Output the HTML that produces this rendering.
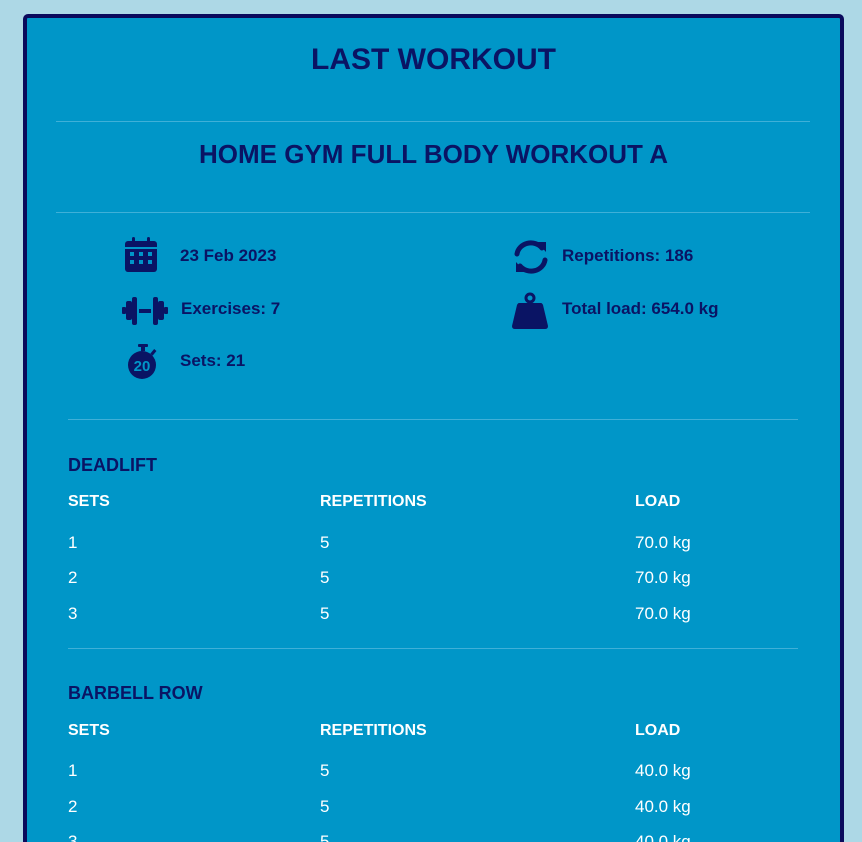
<!DOCTYPE html>
<html style="height:842px;overflow:hidden"><head><style>
body{margin:0;background:#add8e6;width:862px;height:842px;overflow:hidden;font-family:"Liberation Sans",sans-serif;position:relative;}
.card{position:absolute;left:23px;top:14px;width:813px;height:830px;background:#0096c8;border:4px solid #0a0a5c;border-radius:5px;overflow:hidden;}
.t{position:absolute;left:0;width:813px;text-align:center;color:#0a1464;font-weight:bold;}
.hr{position:absolute;height:1px;background:#3fb0d8;}
.st{position:absolute;color:#0a1464;font-weight:bold;font-size:17px;}
.ic{position:absolute;}
.ex{position:absolute;color:#0a1464;font-weight:bold;font-size:18px;}
.h{position:absolute;color:#fff;font-weight:bold;font-size:16px;}
.v{position:absolute;color:#fff;font-size:17px;}
</style></head><body>
<div class="card">
<div class="t" style="top:25px;font-size:30px;">LAST WORKOUT</div>
<div class="hr" style="left:29px;width:754px;top:103px"></div>
<div class="t" style="top:121px;font-size:26px;">HOME GYM FULL BODY WORKOUT A</div>
<div class="hr" style="left:29px;width:754px;top:194px"></div>

<svg class="ic" style="left:98px;top:219px" width="32" height="36" viewBox="0 0 32 36"><rect x="7" y="0" width="3" height="7" rx="1.5" fill="#0a1464"/><rect x="22" y="0" width="3" height="7" rx="1.5" fill="#0a1464"/><rect x="0" y="4" width="32" height="31" rx="3" fill="#0a1464"/><rect x="0" y="10" width="32" height="2" fill="#0096c8"/><g fill="#0096c8"><rect x="5" y="15" width="4" height="4"/><rect x="14" y="15" width="4" height="4"/><rect x="23" y="15" width="4" height="4"/><rect x="5" y="23" width="4" height="4"/><rect x="14" y="23" width="4" height="4"/><rect x="23" y="23" width="4" height="4"/></g></svg>
<div class="st" style="left:153px;top:228px">23 Feb 2023</div>

<svg class="ic" style="left:95px;top:278px" width="46" height="30" viewBox="0 0 46 30"><g fill="#0a1464"><rect x="0" y="11" width="4" height="7" rx="1"/><rect x="4" y="5" width="6" height="19" rx="2"/><rect x="10" y="1" width="5" height="28" rx="2"/><rect x="17" y="13" width="12" height="4"/><rect x="31" y="1" width="5" height="28" rx="2"/><rect x="36" y="5" width="6" height="19" rx="2"/><rect x="42" y="11" width="4" height="7" rx="1"/></g></svg>
<div class="st" style="left:154px;top:281px">Exercises: 7</div>

<svg class="ic" style="left:100px;top:326px" width="32" height="36" viewBox="0 0 32 36"><rect x="11" y="0" width="10" height="3" rx="1" fill="#0a1464"/><rect x="14" y="2" width="4" height="5" fill="#0a1464"/><rect x="25" y="5" width="3" height="6" transform="rotate(40 26 8)" fill="#0a1464"/><circle cx="15" cy="21" r="14" fill="#0a1464"/><text x="15" y="27" text-anchor="middle" fill="#0096c8" font-family="Liberation Sans" font-weight="bold" font-size="15">20</text></svg>
<div class="st" style="left:153px;top:333px">Sets: 21</div>

<svg class="ic" style="left:486px;top:222px" width="36" height="34" viewBox="0 0 36 34"><g fill="none" stroke="#0a1464" stroke-width="5" stroke-linecap="round"><path d="M4 14 A14 13 0 0 1 29 8"/><path d="M32 20 A14 13 0 0 1 7 26"/></g><path d="M24 2 L33 2 L33 12 Z" fill="#0a1464"/><path d="M12 32 L3 32 L3 22 Z" fill="#0a1464"/></svg>
<div class="st" style="left:535px;top:228px">Repetitions: 186</div>

<svg class="ic" style="left:484px;top:274px" width="38" height="38" viewBox="0 0 38 38"><circle cx="19" cy="6" r="4" fill="none" stroke="#0a1464" stroke-width="3"/><path d="M8 11 H30 Q31 11 32 13 L37 34 Q37 37 34 37 H4 Q1 37 1 34 L6 13 Q7 11 8 11Z" fill="#0a1464"/></svg>
<div class="st" style="left:535px;top:281px">Total load: 654.0 kg</div>

<div class="hr" style="left:41px;width:730px;top:401px"></div>
<div class="ex" style="left:41px;top:437px">DEADLIFT</div>
<div class="h" style="left:41px;top:475px">SETS</div><div class="h" style="left:293px;top:475px">REPETITIONS</div><div class="h" style="left:608px;top:475px">LOAD</div>
<div class="v" style="left:41px;top:515px">1</div><div class="v" style="left:293px;top:515px">5</div><div class="v" style="left:608px;top:515px">70.0 kg</div>
<div class="v" style="left:41px;top:550px">2</div><div class="v" style="left:293px;top:550px">5</div><div class="v" style="left:608px;top:550px">70.0 kg</div>
<div class="v" style="left:41px;top:586px">3</div><div class="v" style="left:293px;top:586px">5</div><div class="v" style="left:608px;top:586px">70.0 kg</div>
<div class="hr" style="left:41px;width:730px;top:630px"></div>
<div class="ex" style="left:41px;top:665px">BARBELL ROW</div>
<div class="h" style="left:41px;top:704px">SETS</div><div class="h" style="left:293px;top:704px">REPETITIONS</div><div class="h" style="left:608px;top:704px">LOAD</div>
<div class="v" style="left:41px;top:743px">1</div><div class="v" style="left:293px;top:743px">5</div><div class="v" style="left:608px;top:743px">40.0 kg</div>
<div class="v" style="left:41px;top:779px">2</div><div class="v" style="left:293px;top:779px">5</div><div class="v" style="left:608px;top:779px">40.0 kg</div>
<div class="v" style="left:41px;top:814px">3</div><div class="v" style="left:293px;top:814px">5</div><div class="v" style="left:608px;top:814px">40.0 kg</div>
</div>
</body></html>
